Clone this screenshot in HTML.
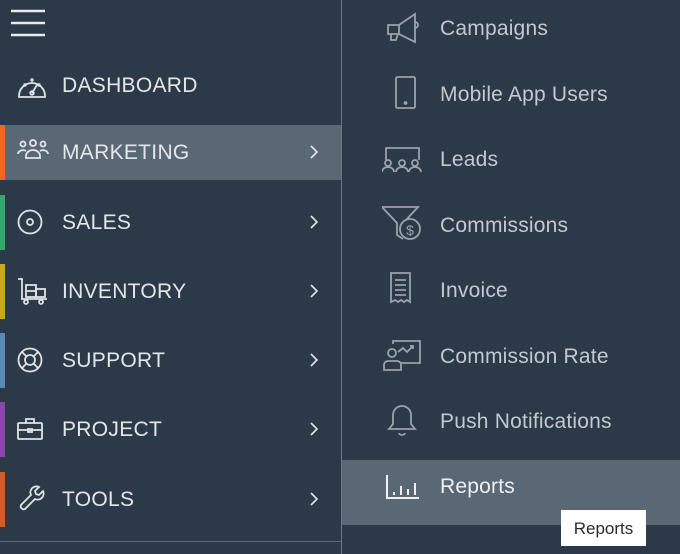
<!DOCTYPE html>
<html><head><style>
body{margin:0;width:680px;height:554px;background:#2b3949;font-family:"Liberation Sans",sans-serif;position:relative;overflow:hidden}
.l{position:absolute;left:0;width:341px;height:55px;color:#e4e7ea;font-size:21px}
.l .t{position:absolute;left:62px;top:50%;transform:translateY(-50%);letter-spacing:0.3px}
.l .bar{position:absolute;left:0;top:0;width:5px;height:100%}
.l .ch{position:absolute;left:308px;top:19px}
.l svg.i{position:absolute;left:17px;top:12px}
.r{position:absolute;left:342px;width:338px;height:65px;color:#c3c9cf;font-size:21px}
.r .t{position:absolute;left:98px;top:50%;transform:translateY(-50%);letter-spacing:0.2px}
.r svg{position:absolute;left:40px;top:12px}
</style></head><body>
<div style="position:absolute;left:341px;top:0;width:1px;height:554px;background:#6b7783"></div>
<div style="position:absolute;left:0;top:541px;width:341px;height:1px;background:#5d6874"></div>
<svg style="position:absolute;left:10px;top:9px" width="36" height="28"><g stroke="#e8eaec" stroke-width="2.5"><line x1="1" y1="2" x2="35" y2="2"/><line x1="1" y1="14" x2="35" y2="14"/><line x1="1" y1="26" x2="35" y2="26"/></g></svg>

<div class="l" style="top:58px"><svg class="i" width="30" height="30" viewBox="0 0 30 30" fill="none" stroke="#dfe3e6" stroke-width="1.8"><path d="M2 26a13 13 0 1 1 26 0v1H2z"/><path d="M15 23l5-8"/><circle cx="15" cy="23" r="1.8"/><circle cx="8" cy="15" r="0.8" fill="#dfe3e6"/><circle cx="15" cy="10" r="0.8" fill="#dfe3e6"/><circle cx="22" cy="15" r="0.8" fill="#dfe3e6"/></svg><span class="t">DASHBOARD</span></div>

<div class="l" style="top:125px;background:#5a6876"><div class="bar" style="background:#f26522"></div><svg class="i" width="32" height="30" viewBox="0 0 32 30" fill="none" stroke="#e4e7ea" stroke-width="1.8"><circle cx="16" cy="6" r="3"/><circle cx="6" cy="7" r="2.5"/><circle cx="26" cy="7" r="2.5"/><path d="M9 19a7 6 0 0 1 14 0v2H9z"/><path d="M1 17a5 4 0 0 1 8-3M31 17a5 4 0 0 0-8-3"/></svg><span class="t">MARKETING</span><svg class="ch" width="12" height="16"><path d="M3 2l6 6-6 6" stroke="#e4e7ea" stroke-width="1.6" fill="none"/></svg></div>

<div class="l" style="top:195px"><div class="bar" style="background:#3aa56e"></div><svg class="i" width="30" height="30" viewBox="0 0 30 30" fill="none" stroke="#dfe3e6" stroke-width="1.8"><circle cx="13" cy="15" r="11.5"/><circle cx="13" cy="15" r="3"/></svg><span class="t">SALES</span><svg class="ch" width="12" height="16"><path d="M3 2l6 6-6 6" stroke="#e4e7ea" stroke-width="1.6" fill="none"/></svg></div>

<div class="l" style="top:264px"><div class="bar" style="background:#c9a81c"></div><svg class="i" width="34" height="30" viewBox="0 0 34 30" fill="none" stroke="#dfe3e6" stroke-width="1.8"><path d="M1 3h4v20h25"/><rect x="9" y="9" width="10" height="12"/><rect x="19" y="13" width="9" height="8"/><path d="M9 15h10"/><circle cx="9" cy="26" r="2"/><circle cx="24" cy="26" r="2"/></svg><span class="t">INVENTORY</span><svg class="ch" width="12" height="16"><path d="M3 2l6 6-6 6" stroke="#e4e7ea" stroke-width="1.6" fill="none"/></svg></div>

<div class="l" style="top:333px"><div class="bar" style="background:#5b8bb5"></div><svg class="i" width="30" height="30" viewBox="0 0 30 30" fill="none" stroke="#dfe3e6" stroke-width="1.8"><circle cx="13" cy="15" r="11.5"/><circle cx="13" cy="15" r="5"/><path d="M5 7l4 4M21 7l-4 4M5 23l4-4M21 23l-4-4"/></svg><span class="t">SUPPORT</span><svg class="ch" width="12" height="16"><path d="M3 2l6 6-6 6" stroke="#e4e7ea" stroke-width="1.6" fill="none"/></svg></div>

<div class="l" style="top:402px"><div class="bar" style="background:#8e44ad"></div><svg class="i" width="30" height="30" viewBox="0 0 30 30" fill="none" stroke="#dfe3e6" stroke-width="1.8"><rect x="1" y="9" width="24" height="16" rx="1"/><path d="M9 9V5h8v4M1 16h24"/><rect x="11" y="15" width="4" height="3"/></svg><span class="t">PROJECT</span><svg class="ch" width="12" height="16"><path d="M3 2l6 6-6 6" stroke="#e4e7ea" stroke-width="1.6" fill="none"/></svg></div>

<div class="l" style="top:472px"><div class="bar" style="background:#d35a2a"></div><svg class="i" width="30" height="30" viewBox="0 0 30 30" fill="none" stroke="#dfe3e6" stroke-width="1.8"><path d="M4 21l10-10a6 6 0 0 1 8-8l-4 4 1 3 3 1 4-4a6 6 0 0 1-8 8L8 25a3 3 0 0 1-4-4z"/></svg><span class="t">TOOLS</span><svg class="ch" width="12" height="16"><path d="M3 2l6 6-6 6" stroke="#e4e7ea" stroke-width="1.6" fill="none"/></svg></div>

<div class="r" style="top:-4px"><svg width="40" height="40" viewBox="0 0 40 40" fill="none" stroke="#9aa2ab" stroke-width="1.8"><path d="M6 17h11l16-11v28L17 26H6z"/><path d="M17 17v9M9 26v6h5l2-6"/><path d="M33 14a3 3 0 0 1 0 6"/></svg><span class="t">Campaigns</span></div>
<div class="r" style="top:62px"><svg width="40" height="40" viewBox="0 0 40 40" fill="none" stroke="#9aa2ab" stroke-width="1.8"><rect x="14" y="3" width="19" height="31" rx="1.5"/><circle cx="23.5" cy="29" r="1" fill="#9aa2ab"/></svg><span class="t">Mobile App Users</span></div>
<div class="r" style="top:127px"><svg width="44" height="40" viewBox="0 0 44 40" fill="none" stroke="#9aa2ab" stroke-width="1.8"><path d="M4 21V9h33v12"/><circle cx="6" cy="24" r="3"/><circle cx="20" cy="24" r="3"/><circle cx="33" cy="24" r="3"/><path d="M0 33a6 5 0 0 1 12 0M14 33a6 5 0 0 1 12 0M27 33a6 5 0 0 1 12 0"/></svg><span class="t">Leads</span></div>
<div class="r" style="top:193px"><svg width="44" height="42" viewBox="0 0 44 42" fill="none" stroke="#9aa2ab" stroke-width="1.8"><path d="M0 2h36L24 15"/><path d="M0 2l15 16v12l6 4"/><circle cx="28" cy="24" r="10"/><text x="28" y="30" font-size="14" text-anchor="middle" fill="#9aa2ab" stroke="none" font-family="Liberation Sans">$</text></svg><span class="t">Commissions</span></div>
<div class="r" style="top:258px"><svg width="40" height="40" viewBox="0 0 40 40" fill="none" stroke="#9aa2ab" stroke-width="1.8"><path d="M9 3h19v29l-3-2-3 2-3-2-3 2-3-2-4 2z"/><path d="M13 10h11M13 15h11M13 20h11M13 25h11"/></svg><span class="t">Invoice</span></div>
<div class="r" style="top:324px"><svg width="44" height="40" viewBox="0 0 44 40" fill="none" stroke="#9aa2ab" stroke-width="1.8"><path d="M11 8V5h27v22H18"/><circle cx="10" cy="17" r="4"/><path d="M2 34v-5a4 4 0 0 1 4-4h9a4 4 0 0 1 4 4v5z"/><path d="M16 16l5-4 4 4 6-6M28 10h3v3"/></svg><span class="t">Commission Rate</span></div>
<div class="r" style="top:389px"><svg width="40" height="40" viewBox="0 0 40 40" fill="none" stroke="#9aa2ab" stroke-width="1.8"><path d="M20 5a9 9 0 0 1 9 9v9l4 5H7l4-5v-9a9 9 0 0 1 9-9z"/><path d="M17 32a3 2 0 0 0 6 0"/></svg><span class="t">Push Notifications</span></div>
<div class="r" style="top:460px;background:#5a6876;color:#eef0f2"><svg width="40" height="40" viewBox="0 0 40 40" fill="none" stroke="#eef0f2" stroke-width="2" style="top:8px"><path d="M5 7v23h32"/><path d="M12 24v3M19 18v9M26 21v6M33 15v12"/></svg><span class="t" style="top:27px">Reports</span></div>
<div style="position:absolute;left:561px;top:510px;width:85px;height:36px;background:#fff;color:#2b2b2b;font-size:17px;line-height:38px;text-align:center">Reports</div>
</body></html>
